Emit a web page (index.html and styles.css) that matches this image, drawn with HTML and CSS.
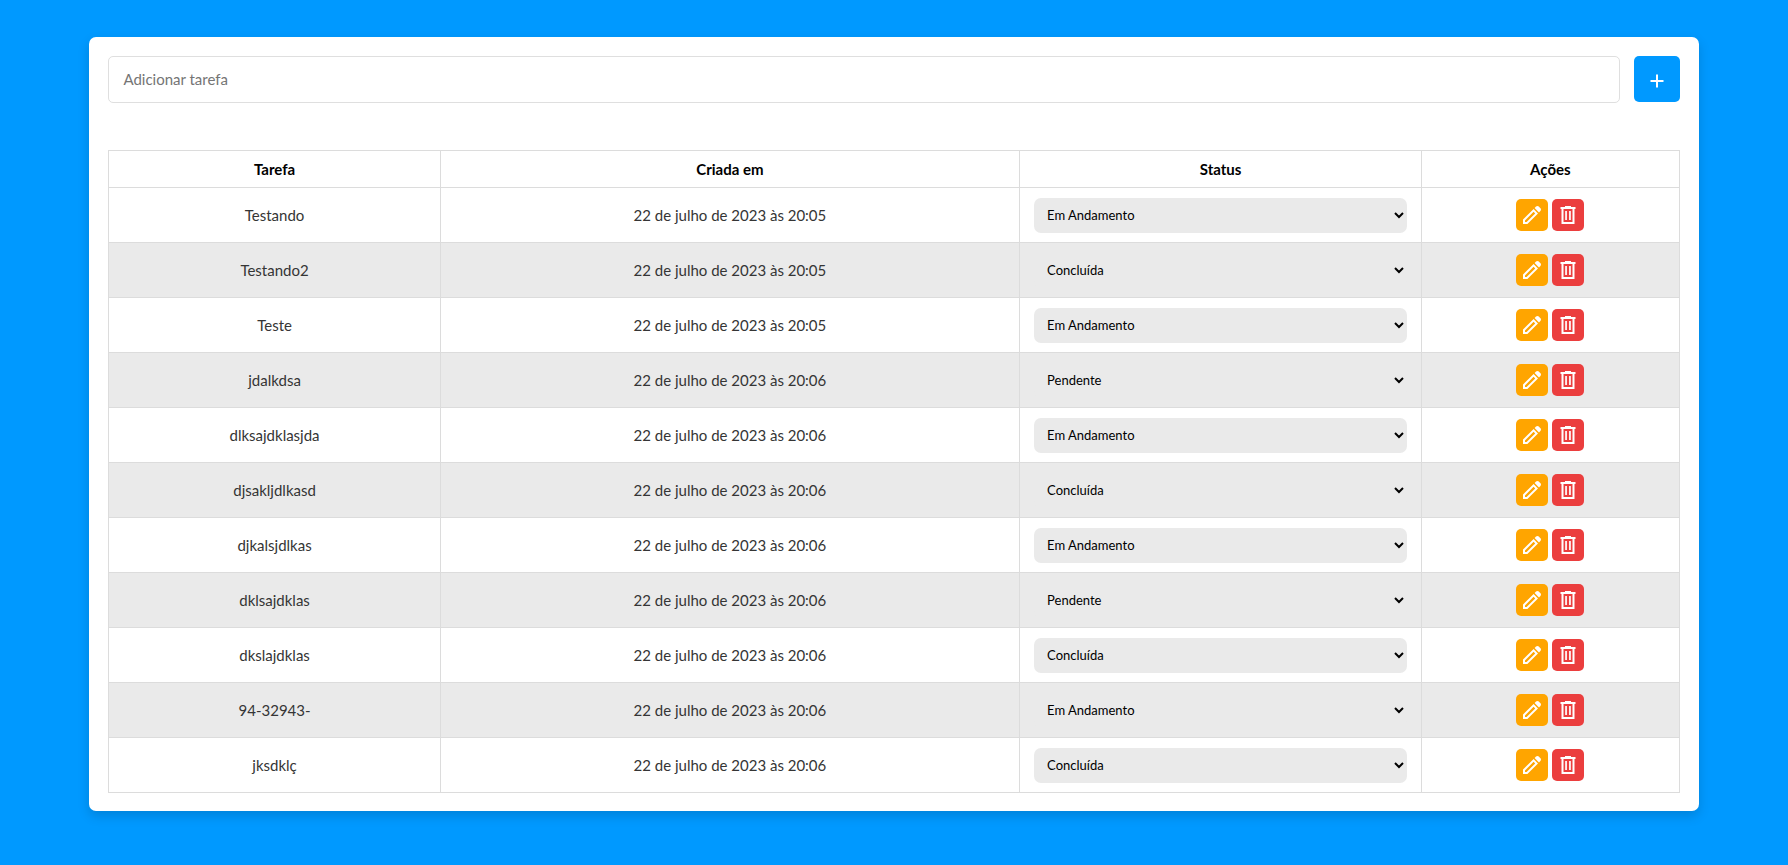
FILE: index.html
```html
<!DOCTYPE html>
<html lang="pt-BR">
<head>
<meta charset="utf-8">
<meta name="viewport" content="width=device-width, initial-scale=1">
<title>Tarefas</title>
<link rel="stylesheet" href="styles.css">
</head>
<body>
<svg class="sprite" aria-hidden="true">
  <symbol id="edit" viewBox="0 0 24 24"><path fill-rule="evenodd" d="M3 16.600 13.600 6 18 10.400 7.400 21H3ZM5 19h1.600l8.600-8.600-1.600-1.600L5 17.400Z"/><path d="M14.600 5 16 3.600a2 2 0 0 1 2.800 0l1.600 1.600a2 2 0 0 1 0 2.800L19 9.400Z"/></symbol>
  <symbol id="delete" viewBox="0 0 24 24"><path fill-rule="evenodd" d="M9 3h6v1h4.500v2h-1v15h-13V6h-1V4H9ZM7.500 6v13h9V6ZM9.200 8h1.700v9H9.200ZM13.100 8h1.700v9h-1.700Z"/></symbol>
  <symbol id="add" viewBox="0 0 24 24"><path d="M11 5.500h2V11h5.500v2H13v5.500h-2V13H5.500v-2H11Z"/></symbol>
</svg>
<main class="card">
  <form class="add-form">
    <input class="add-input" type="text" placeholder="Adicionar tarefa" aria-label="Adicionar tarefa">
    <button class="add-button" type="submit" aria-label="Adicionar"><svg class="icon"><use href="#add"/></svg></button>
  </form>
  <table class="tasks">
    <colgroup><col class="col-task"><col class="col-date"><col class="col-status"><col class="col-actions"></colgroup>
    <thead>
      <tr><th>Tarefa</th><th>Criada em</th><th>Status</th><th>Ações</th></tr>
    </thead>
    <tbody>
      <tr><td>Testando</td><td>22 de julho de 2023 às 20:05</td><td><select class="status" aria-label="Status"><option>Pendente</option><option selected>Em Andamento</option><option>Concluída</option></select></td><td><div class="actions"><button class="action edit" aria-label="Editar"><svg class="icon"><use href="#edit"/></svg></button><button class="action delete" aria-label="Excluir"><svg class="icon"><use href="#delete"/></svg></button></div></td></tr>
      <tr><td>Testando2</td><td>22 de julho de 2023 às 20:05</td><td><select class="status" aria-label="Status"><option>Pendente</option><option>Em Andamento</option><option selected>Concluída</option></select></td><td><div class="actions"><button class="action edit" aria-label="Editar"><svg class="icon"><use href="#edit"/></svg></button><button class="action delete" aria-label="Excluir"><svg class="icon"><use href="#delete"/></svg></button></div></td></tr>
      <tr><td>Teste</td><td>22 de julho de 2023 às 20:05</td><td><select class="status" aria-label="Status"><option>Pendente</option><option selected>Em Andamento</option><option>Concluída</option></select></td><td><div class="actions"><button class="action edit" aria-label="Editar"><svg class="icon"><use href="#edit"/></svg></button><button class="action delete" aria-label="Excluir"><svg class="icon"><use href="#delete"/></svg></button></div></td></tr>
      <tr><td>jdalkdsa</td><td>22 de julho de 2023 às 20:06</td><td><select class="status" aria-label="Status"><option selected>Pendente</option><option>Em Andamento</option><option>Concluída</option></select></td><td><div class="actions"><button class="action edit" aria-label="Editar"><svg class="icon"><use href="#edit"/></svg></button><button class="action delete" aria-label="Excluir"><svg class="icon"><use href="#delete"/></svg></button></div></td></tr>
      <tr><td>dlksajdklasjda</td><td>22 de julho de 2023 às 20:06</td><td><select class="status" aria-label="Status"><option>Pendente</option><option selected>Em Andamento</option><option>Concluída</option></select></td><td><div class="actions"><button class="action edit" aria-label="Editar"><svg class="icon"><use href="#edit"/></svg></button><button class="action delete" aria-label="Excluir"><svg class="icon"><use href="#delete"/></svg></button></div></td></tr>
      <tr><td>djsakljdlkasd</td><td>22 de julho de 2023 às 20:06</td><td><select class="status" aria-label="Status"><option>Pendente</option><option>Em Andamento</option><option selected>Concluída</option></select></td><td><div class="actions"><button class="action edit" aria-label="Editar"><svg class="icon"><use href="#edit"/></svg></button><button class="action delete" aria-label="Excluir"><svg class="icon"><use href="#delete"/></svg></button></div></td></tr>
      <tr><td>djkalsjdlkas</td><td>22 de julho de 2023 às 20:06</td><td><select class="status" aria-label="Status"><option>Pendente</option><option selected>Em Andamento</option><option>Concluída</option></select></td><td><div class="actions"><button class="action edit" aria-label="Editar"><svg class="icon"><use href="#edit"/></svg></button><button class="action delete" aria-label="Excluir"><svg class="icon"><use href="#delete"/></svg></button></div></td></tr>
      <tr><td>dklsajdklas</td><td>22 de julho de 2023 às 20:06</td><td><select class="status" aria-label="Status"><option selected>Pendente</option><option>Em Andamento</option><option>Concluída</option></select></td><td><div class="actions"><button class="action edit" aria-label="Editar"><svg class="icon"><use href="#edit"/></svg></button><button class="action delete" aria-label="Excluir"><svg class="icon"><use href="#delete"/></svg></button></div></td></tr>
      <tr><td>dkslajdklas</td><td>22 de julho de 2023 às 20:06</td><td><select class="status" aria-label="Status"><option>Pendente</option><option>Em Andamento</option><option selected>Concluída</option></select></td><td><div class="actions"><button class="action edit" aria-label="Editar"><svg class="icon"><use href="#edit"/></svg></button><button class="action delete" aria-label="Excluir"><svg class="icon"><use href="#delete"/></svg></button></div></td></tr>
      <tr><td>94-32943-</td><td>22 de julho de 2023 às 20:06</td><td><select class="status" aria-label="Status"><option>Pendente</option><option selected>Em Andamento</option><option>Concluída</option></select></td><td><div class="actions"><button class="action edit" aria-label="Editar"><svg class="icon"><use href="#edit"/></svg></button><button class="action delete" aria-label="Excluir"><svg class="icon"><use href="#delete"/></svg></button></div></td></tr>
      <tr><td>jksdklç</td><td>22 de julho de 2023 às 20:06</td><td><select class="status" aria-label="Status"><option>Pendente</option><option>Em Andamento</option><option selected>Concluída</option></select></td><td><div class="actions"><button class="action edit" aria-label="Editar"><svg class="icon"><use href="#edit"/></svg></button><button class="action delete" aria-label="Excluir"><svg class="icon"><use href="#delete"/></svg></button></div></td></tr>
    </tbody>
  </table>
</main>
</body>
</html>
```

FILE: styles.css
```css
* {
  box-sizing: border-box;
}

body {
  margin: 0;
  padding: 37px 5%;
  background: #0099ff;
  font-family: Lato, "Open Sans", sans-serif;
  font-size: 15px;
  color: #353535;
}

.sprite {
  display: none;
}

.card {
  padding: 19px 19px 18px;
  border-radius: 7px;
  background: #fff;
  box-shadow: 0 5px 12px rgba(0, 0, 0, 0.15);
}

.add-form {
  display: flex;
  gap: 14px;
  margin-bottom: 47px;
}

.add-input {
  flex: 1;
  min-width: 0;
  height: 47px;
  padding: 0 14px 2px;
  border: 1px solid #dfdfdf;
  border-radius: 5px;
  font: inherit;
}

.add-input::placeholder {
  color: #757575;
}

button {
  display: flex;
  align-items: center;
  justify-content: center;
  padding: 0;
  border: 0;
  border-radius: 5px;
  color: #fff;
  cursor: pointer;
}

.icon {
  width: 24px;
  height: 24px;
  fill: currentColor;
}

.add-button {
  width: 46px;
  height: 46px;
  padding-top: 3px;
  background: #0099ff;
}

.tasks {
  width: 100%;
  table-layout: fixed;
  border-collapse: collapse;
  text-align: center;
}

.col-task { width: 21.1%; }
.col-date { width: 36.9%; }
.col-status { width: 25.6%; }
.col-actions { width: 16.4%; }

th,
td {
  padding: 0 14px;
  border: 1px solid #dcdcdc;
}

th {
  height: 37px;
  color: #000;
  font-weight: 700;
}

td {
  height: 55px;
}

tbody tr:nth-child(even) {
  background: #eaeaea;
}

.status {
  display: block;
  width: 100%;
  height: 35px;
  padding: 0 0 0 9px;
  border: 0;
  border-radius: 7px;
  background-color: #eaeaea;
  color: #000;
  font-family: inherit;
  font-size: 13px;
}

.actions {
  display: flex;
  justify-content: center;
  gap: 4px;
}

.action {
  width: 32px;
  height: 32px;
}

.edit {
  background: #ffa500;
}

.delete {
  background: #eb3e3e;
}
```
